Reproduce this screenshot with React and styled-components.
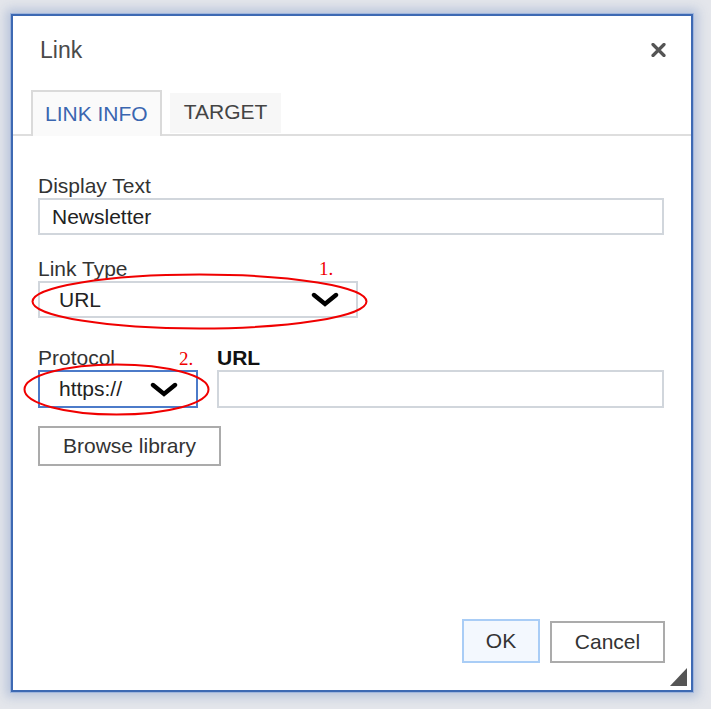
import React from 'react';
import styled, { createGlobalStyle } from 'styled-components';

const GlobalStyle = createGlobalStyle`
  html, body {
    margin: 0;
    padding: 0;
    background: #e4e6eb;
    font-family: "Liberation Sans", Arial, sans-serif;
  }
`;

const Page = styled.div`
  width: 711px;
  height: 709px;
  padding: 14px 0 0 11px;
  box-sizing: border-box;
  overflow: hidden;
`;

const Dialog = styled.div`
  position: relative;
  width: 682px;
  height: 678px;
  box-sizing: border-box;
  background: #fff;
  border: 2px solid #3d69b3;
  box-shadow: 0 0 0 1px #9fb5dc, 0 0 10px 5px rgba(130, 155, 200, 0.45);
  display: flex;
  flex-direction: column;
`;

const Header = styled.div`
  display: flex;
  align-items: center;
  justify-content: space-between;
  padding: 21px 25px 0 27px;
  height: 26px;
  margin-bottom: 26px;
`;

const Title = styled.div`
  font-size: 23px;
  line-height: 26px;
  color: #4a4a4a;
`;

const CloseButton = styled.button`
  border: none;
  background: none;
  padding: 0;
  width: 16px;
  height: 16px;
  display: flex;
  align-items: center;
  justify-content: center;
  cursor: pointer;
`;

const Tabs = styled.div`
  display: flex;
  align-items: flex-end;
  gap: 8px;
  padding-left: 18px;
  border-bottom: 2px solid #dedede;
  margin-top: 1px;
`;

const Tab = styled.div`
  box-sizing: border-box;
  display: flex;
  align-items: center;
  padding: 0 12px;
  font-size: 21px;
  color: ${(p) => (p.active ? '#3a66b0' : '#444')};
  background: ${(p) => (p.active ? '#fafafa' : '#f7f7f7')};
  height: ${(p) => (p.active ? '46px' : '40px')};
  margin-bottom: ${(p) => (p.active ? '-2px' : '1px')};
  padding-bottom: ${(p) => (p.active ? '0' : '5px')};
  border: ${(p) => (p.active ? '2px solid #dadada' : '2px solid transparent')};
  border-bottom: none;
`;

const Form = styled.div`
  display: flex;
  flex-direction: column;
  padding: 38px 27px 0 25px;
`;

const Label = styled.label`
  display: block;
  font-size: 21px;
  line-height: 24px;
  color: ${(p) => (p.bold ? '#111' : '#333')};
  font-weight: ${(p) => (p.bold ? 'bold' : 'normal')};
  margin-top: ${(p) => p.gap || 0}px;
  white-space: nowrap;
`;

const TextBox = styled.div`
  box-sizing: border-box;
  height: ${(p) => p.h || 37}px;
  border: 2px solid #d1d6dc;
  padding: 0 12px;
  display: flex;
  align-items: center;
  font-size: 21px;
  color: #222;
`;

const Select = styled.div`
  box-sizing: border-box;
  width: ${(p) => p.w}px;
  height: ${(p) => p.h}px;
  border: 2px solid ${(p) => (p.focused ? '#4c7bc9' : '#d1d6dc')};
  padding: 0 ${(p) => p.pr}px 0 19px;
  display: flex;
  align-items: center;
  justify-content: space-between;
  font-size: 21px;
  color: #222;
`;

const Row = styled.div`
  display: flex;
  gap: 19px;
  margin-top: 28px;
`;

const Column = styled.div`
  display: flex;
  flex-direction: column;
  flex: ${(p) => (p.grow ? 1 : 'none')};
`;

const Button = styled.button`
  box-sizing: border-box;
  font-family: "Liberation Sans", Arial, sans-serif;
  font-size: 21px;
  color: #333;
  background: ${(p) => (p.primary ? '#f3f8fe' : '#fff')};
  border: 2px solid ${(p) => (p.primary ? '#a9cdf6' : '#ababab')};
  height: ${(p) => p.h}px;
  width: ${(p) => (p.w ? `${p.w}px` : 'auto')};
  padding: ${(p) => (p.w ? '0' : '0 23px')};
  cursor: pointer;
`;

const BrowseWrap = styled.div`
  margin-top: 18px;
`;

const Footer = styled.div`
  margin-top: auto;
  display: flex;
  justify-content: flex-end;
  align-items: flex-end;
  gap: 10px;
  padding: 0 26px 27px 0;
`;

const Grip = styled.div`
  position: absolute;
  right: 4px;
  bottom: 4px;
  width: 0;
  height: 0;
  border-left: 17px solid transparent;
  border-bottom: 18px solid #555;
`;

const Annotations = styled.svg`
  position: absolute;
  left: -13px;
  top: -16px;
  width: 711px;
  height: 709px;
  pointer-events: none;
  overflow: visible;
`;

const Chevron = () => (
  <svg width="28" height="15" viewBox="0 0 28 15">
    <path d="M3 3 L14 12 L25 3" fill="none" stroke="#000" strokeWidth="4.4" strokeLinecap="round" strokeLinejoin="miter" />
  </svg>
);

const CloseIcon = () => (
  <svg width="15" height="14" viewBox="0 0 15 14">
    <path d="M2 1.5 L13 12.5 M13 1.5 L2 12.5" stroke="#555" strokeWidth="3.2" strokeLinecap="round" />
  </svg>
);

const App = () => {
  return (
    <>
      <GlobalStyle />
      <Page>
        <Dialog>
          <Header>
            <Title>Link</Title>
            <CloseButton aria-label="Close">
              <CloseIcon />
            </CloseButton>
          </Header>

          <Tabs>
            <Tab active>LINK INFO</Tab>
            <Tab>TARGET</Tab>
          </Tabs>

          <Form>
            <Label>Display Text</Label>
            <TextBox>Newsletter</TextBox>

            <Label gap={22}>Link Type</Label>
            <Select w={320} h={37} pr={17}>
              <span>URL</span>
              <Chevron />
            </Select>

            <Row>
              <Column>
                <Label>Protocol</Label>
                <Select w={160} h={38} pr={18} focused>
                  <span>https://</span>
                  <Chevron />
                </Select>
              </Column>
              <Column grow>
                <Label bold>URL</Label>
                <TextBox h={38} />
              </Column>
            </Row>

            <BrowseWrap>
              <Button h={40}>Browse library</Button>
            </BrowseWrap>
          </Form>

          <Footer>
            <Button primary h={44} w={78}>OK</Button>
            <Button h={42} w={115}>Cancel</Button>
          </Footer>

          <Grip />

          <Annotations viewBox="0 0 711 709">
            <ellipse cx="199.5" cy="301.5" rx="167" ry="27" fill="none" stroke="#f00000" strokeWidth="2" />
            <ellipse cx="116.5" cy="389.5" rx="92" ry="25" fill="none" stroke="#f00000" strokeWidth="2" />
            <text x="319" y="275" fontFamily="'Liberation Serif', serif" fontSize="19" fill="#f00000">1.</text>
            <text x="179" y="365" fontFamily="'Liberation Serif', serif" fontSize="19" fill="#f00000">2.</text>
          </Annotations>
        </Dialog>
      </Page>
    </>
  );
};

export default App;
